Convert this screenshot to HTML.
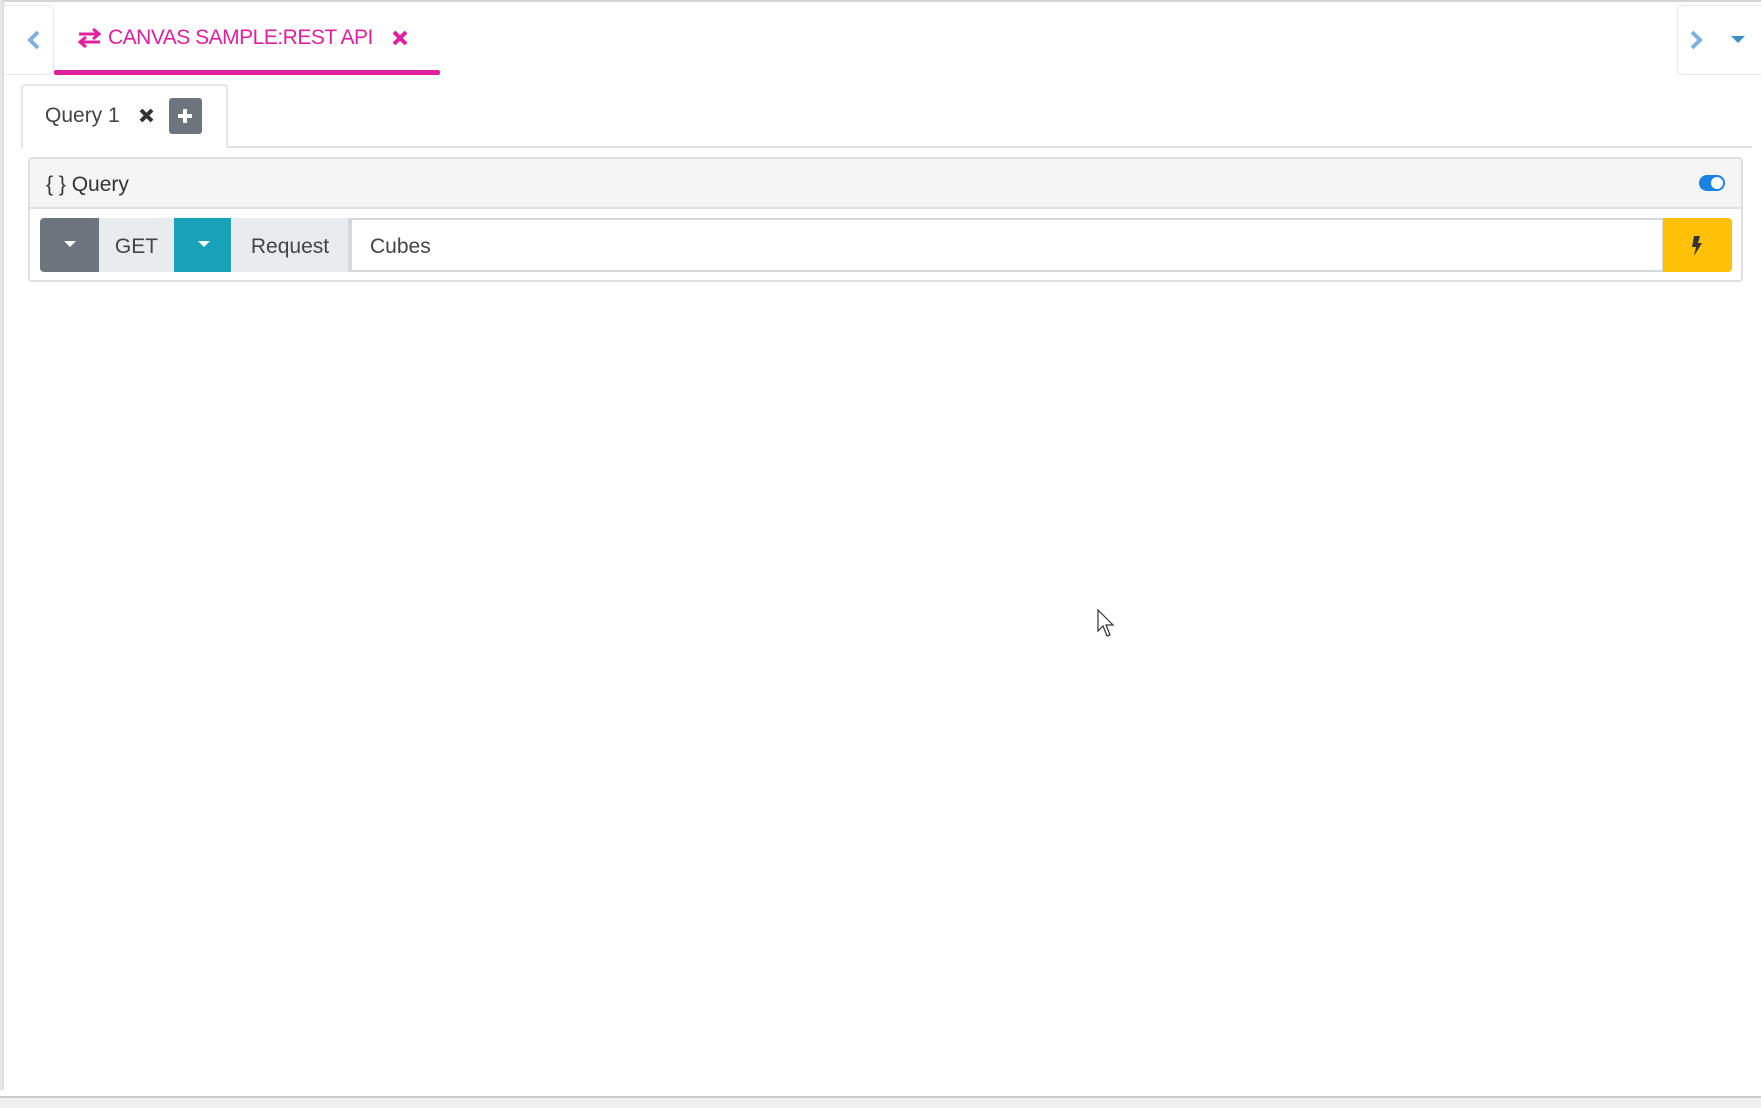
<!DOCTYPE html>
<html><head><meta charset="utf-8"><style>
*{box-sizing:border-box;margin:0;padding:0}
body{width:1761px;height:1108px;background:#fff;position:relative;overflow:hidden;font-family:"Liberation Sans",sans-serif;color:#333}
.a{position:absolute}
</style></head><body>
<div class="a" style="left:0;top:0;width:1761px;height:2px;background:#d4d4d4"></div>
<div class="a" style="left:0;top:0;width:4px;height:1090px;background:#e6e6e6;border-right:1px solid #d8d8d8"></div>
<div class="a" style="left:0;top:1096px;width:1761px;height:2px;background:#cccccc"></div>
<div class="a" style="left:0;top:1098px;width:1761px;height:10px;background:#f0f0f0"></div>
<div class="a" style="left:4px;top:5px;width:50px;height:70px;border:1px solid #e8e8e8;border-left:none;border-radius:0 6px 6px 0"></div>
<svg class="a" style="left:26px;top:29px" width="16" height="22" viewBox="0 0 16 22"><path d="M12 3 L4 11 L12 19" fill="none" stroke="#7fb0e0" stroke-width="4"/></svg>
<div class="a" style="left:1677px;top:5px;width:90px;height:70px;border:1px solid #e8e8e8;border-right:none;border-radius:6px 0 0 6px"></div>
<svg class="a" style="left:1688px;top:29px" width="16" height="22" viewBox="0 0 16 22"><path d="M4 3 L12 11 L4 19" fill="none" stroke="#7fb0e0" stroke-width="4"/></svg>
<svg class="a" style="left:1731px;top:36px" width="14" height="8"><path d="M0 0H14L7 7Z" fill="#3d8fc7"/></svg>
<svg class="a" style="left:77px;top:28px" width="25" height="20" viewBox="0 0 25 20"><path d="M2 6H21M16 1L22 6L16 11" fill="none" stroke="#e0209e" stroke-width="3"/><path d="M23 14H4M9 9L3 14L9 19" fill="none" stroke="#e0209e" stroke-width="3"/></svg>
<div class="a" style="left:108px;top:26px;font-size:21px;color:#e0209e;white-space:nowrap;letter-spacing:-0.5px">CANVAS SAMPLE:REST API</div>
<svg class="a" style="left:392px;top:30px" width="16" height="16"><path d="M2 2L14 14M14 2L2 14" stroke="#e0209e" stroke-width="4"/></svg>
<div class="a" style="left:54px;top:70px;width:386px;height:5px;background:#e0209e;border-radius:2px"></div>
<div class="a" style="left:21px;top:146px;width:1731px;height:2px;background:#dee2e6"></div>
<div class="a" style="left:21px;top:84px;width:207px;height:64px;border:2px solid #e6e6e6;border-bottom:none;border-radius:4px 4px 0 0;background:#fff"></div>
<div class="a" style="left:45px;top:104px;font-size:21px;color:#444">Query 1</div>
<svg class="a" style="left:139px;top:108px" width="15" height="15"><path d="M2 2L13 13M13 2L2 13" stroke="#333" stroke-width="4"/></svg>
<div class="a" style="left:169px;top:98px;width:33px;height:36px;background:#6c757d;border-radius:3px"></div>
<svg class="a" style="left:176px;top:107px" width="18" height="18"><path d="M9 2V16M2 9H16" stroke="#fff" stroke-width="4"/></svg>
<div class="a" style="left:28px;top:157px;width:1715px;height:125px;border:2px solid #e0e0e0;border-radius:4px;overflow:hidden">
 <div style="height:50px;background:#f5f5f5;border-bottom:2px solid #e0e0e0"></div>
</div>
<div class="a" style="left:46px;top:173px;font-size:21px;color:#333">{ } Query</div>
<div class="a" style="left:1699px;top:175px;width:26px;height:16px;background:#1a82e2;border-radius:8px"></div>
<div class="a" style="left:1711px;top:177px;width:12px;height:12px;background:#fff;border-radius:50%"></div>
<div class="a" style="left:40px;top:218px;width:59px;height:54px;background:#6c757d;border-radius:4px 0 0 4px"></div>
<svg class="a" style="left:64px;top:241px" width="12" height="7"><path d="M0 0H12L6 6Z" fill="#fff"/></svg>
<div class="a" style="left:99px;top:220px;width:75px;height:54px;font-size:21px;color:#444;text-align:center;line-height:54px"></div>
<div class="a" style="left:99px;top:218px;width:75px;height:54px;background:#e9ecef;font-size:21px;color:#444;text-align:center;line-height:58px">GET</div>
<div class="a" style="left:174px;top:218px;width:57px;height:54px;background:#17a2b8"></div>
<svg class="a" style="left:198px;top:241px" width="12" height="7"><path d="M0 0H12L6 6Z" fill="#fff"/></svg>
<div class="a" style="left:232px;top:218px;width:118px;height:54px;background:#e9ecef;border-right:2px solid #d5d9dd;font-size:21px;color:#444;text-align:center;line-height:58px">Request</div>
<div class="a" style="left:350px;top:218px;width:1314px;height:54px;border:2px solid #d5d9dd;font-size:21px;color:#444;line-height:54px;padding-left:18px">Cubes</div>
<div class="a" style="left:1663px;top:218px;width:69px;height:54px;background:#ffc107;border-radius:0 4px 4px 0"></div>
<svg class="a" style="left:1690px;top:235px" width="14" height="22" viewBox="0 0 14 22"><path d="M4 1H10L8 8H12L4 21L6 12H2Z" fill="#333"/></svg>
<svg class="a" style="left:1097px;top:609px" width="20" height="30" viewBox="0 0 20 30"><path d="M1 1V22L6 17L10 27L13 26L9 16H16Z" fill="#fff" stroke="#333" stroke-width="1.2"/></svg>
</body></html>
